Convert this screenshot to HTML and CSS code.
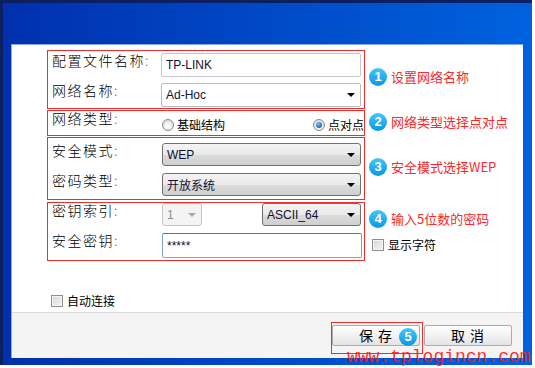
FILE: index.html
```html
<!DOCTYPE html>
<html lang="zh-CN">
<head>
<meta charset="utf-8">
<title>配置文件</title>
<link rel="stylesheet" href="styles.css">
</head>
<body>
<div class="window">
  <div class="client">
    <div class="main">
      <div class="section sec-1">
        <div class="box box-name">
          <div class="row row-24">
            <span class="label label-narrow">配置文件名称<span class="colon">:</span></span>
            <div class="field text-field w-200">TP-LINK</div>
          </div>
          <div class="row row-24">
            <span class="label label-narrow">网络名称<span class="colon">:</span></span>
            <div class="field select-white w-200"><span class="val">Ad-Hoc</span><i class="arrow"></i></div>
          </div>
        </div>
        <div class="note note-1"><span class="badge">1</span><span class="note-text">设置网络名称</span></div>
      </div>

      <div class="section sec-2">
        <div class="box box-type">
          <span class="label">网络类型<span class="colon">:</span></span>
          <div class="radios">
            <span class="radio-item"><span class="radio"></span>基础结构</span>
            <span class="radio-item"><span class="radio checked"></span>点对点</span>
          </div>
        </div>
        <div class="note note-2"><span class="badge">2</span><span class="note-text">网络类型选择点对点</span></div>
      </div>

      <div class="section sec-3">
        <div class="box box-sec">
          <div class="row row-23">
            <span class="label">安全模式<span class="colon">:</span></span>
            <div class="field select-grey w-199"><span class="val">WEP</span><i class="arrow"></i></div>
          </div>
          <div class="row row-23">
            <span class="label">密码类型<span class="colon">:</span></span>
            <div class="field select-grey w-199"><span class="val cjk">开放系统</span><i class="arrow"></i></div>
          </div>
        </div>
        <div class="note note-3"><span class="badge">3</span><span class="note-text">安全模式选择WEP</span></div>
      </div>

      <div class="section sec-4">
        <div class="box box-key">
          <div class="row row-23">
            <span class="label">密钥索引<span class="colon">:</span></span>
            <div class="field select-disabled w-40"><span class="val">1</span><i class="arrow"></i></div>
            <div class="field select-grey w-99 push"><span class="val">ASCII_64</span><i class="arrow"></i></div>
          </div>
          <div class="row row-25">
            <span class="label">安全密钥<span class="colon">:</span></span>
            <div class="field pass-field w-200"><span class="val">*****</span></div>
          </div>
        </div>
        <div class="note-col">
          <div class="note note-4"><span class="badge">4</span><span class="note-text">输入5位数的密码</span></div>
          <div class="check-row show-chars"><span class="checkbox"></span>显示字符</div>
        </div>
      </div>

      <div class="check-row auto-connect"><span class="checkbox"></span>自动连接</div>
    </div>

    <div class="footer">
      <div class="save-mark">
        <div class="btn">保 存</div>
        <span class="badge badge-5">5</span>
      </div>
      <div class="btn btn-cancel">取 消</div>
    </div>
  </div>
</div>
<div class="watermark">www.tplogincn.com</div>
</body>
</html>
```

FILE: styles.css
```css
* {
  box-sizing: border-box;
  margin: 0;
  padding: 0;
}

html,
body {
  width: 535px;
  height: 368px;
  background: #ffffff;
  overflow: hidden;
}

body {
  position: relative;
  font-family: "Noto Sans CJK SC", "Liberation Sans", sans-serif;
  color: #000000;
}

.window {
  width: 532px;
  height: 365px;
  border-top: 3px solid #0c1f60;
  border-left: 3px solid #0c1f60;
  background: linear-gradient(to right, #0030ae, #0062df);
  padding: 41px 9px 7px 8px;
  display: flex;
  flex-direction: column;
}

.client {
  flex: 1;
  display: flex;
  flex-direction: column;
  background: #ffffff;
  border-top: 1px solid #86aaf0;
  border-left: 1px solid #86aaf0;
}

.main {
  height: 267px;
  padding: 5px 0 0 35px;
}

.section {
  display: flex;
  align-items: flex-start;
}

.sec-2,
.sec-3 {
  margin-top: 1px;
}

.sec-4 {
  margin-top: 2px;
}

.box {
  width: 318px;
  border: 1px solid #ee2d2d;
  padding-left: 4px;
}

.box-name {
  height: 59px;
  padding-top: 2px;
  display: flex;
  flex-direction: column;
  gap: 6px;
}

.box-type {
  height: 26px;
  display: flex;
  align-items: flex-start;
}

.box-sec {
  height: 63px;
  padding-top: 5px;
  display: flex;
  flex-direction: column;
  gap: 7px;
}

.box-key {
  height: 59px;
  display: flex;
  flex-direction: column;
  gap: 7px;
}

.row {
  display: flex;
  align-items: flex-start;
}

.row-24 { height: 24px; }
.row-23 { height: 23px; }
.row-25 { height: 25px; }

.label {
  flex: none;
  width: 110px;
  font-size: 14px;
  font-weight: 300;
  line-height: 14px;
  letter-spacing: 1.5px;
  white-space: nowrap;
  color: #000000;
}

.label-narrow {
  width: 109px;
}

.colon {
  color: #9a6a3a;
}

.field {
  flex: none;
  display: flex;
  align-items: center;
  height: 100%;
  padding: 0 5px 0 4px;
  font-family: "Liberation Sans", sans-serif;
  font-size: 12px;
  color: #101030;
  white-space: nowrap;
}

.w-200 { width: 200px; }
.w-199 { width: 199px; }
.w-99 { width: 99px; }
.w-40 { width: 40px; }

.push {
  margin-left: 60px;
}

.val {
  flex: 1;
}

.cjk {
  font-family: "Noto Sans CJK SC", sans-serif;
  font-size: 12px;
}

.arrow {
  flex: none;
  width: 0;
  height: 0;
  border-left: 4px solid transparent;
  border-right: 4px solid transparent;
  border-top: 4px solid #000000;
}

.text-field {
  border: 1px solid #c4c8ce;
  border-radius: 2px;
  background: #ffffff;
}

.select-white {
  border: 1px solid #bcbcbc;
  border-radius: 2px;
  background: #ffffff;
}

.select-grey {
  border: 1px solid #707070;
  border-radius: 3px;
  background: linear-gradient(#f4f4f4, #e9e9e9 50%, #dcdcdc 51%, #cfcfcf);
}

.select-disabled {
  border: 1px solid #c5c5c5;
  border-radius: 3px;
  background: #f4f4f4;
  color: #8c8c8c;
}

.select-disabled .arrow {
  border-top-color: #a8a8a8;
}

.pass-field {
  border: 1px solid #7da2ce;
  border-top-color: #3d7bad;
  border-radius: 2px;
  background: #ffffff;
  align-items: flex-start;
  padding-top: 5px;
}

.radios {
  flex: 1;
  display: flex;
  justify-content: space-between;
  margin-top: 7px;
}

.radio-item {
  display: flex;
  align-items: center;
  gap: 3px;
  height: 14px;
  font-size: 12px;
  line-height: 14px;
}

.radio {
  flex: none;
  width: 12px;
  height: 12px;
  border-radius: 50%;
  border: 1px solid #8a8a8a;
  background: radial-gradient(circle at 50% 60%, #ffffff 0, #f0f0f0 40%, #cfcfcf 100%);
  display: flex;
  align-items: center;
  justify-content: center;
}

.radio.checked::after {
  content: "";
  width: 6px;
  height: 6px;
  border-radius: 50%;
  background: radial-gradient(circle at 40% 35%, #7ec4f5, #1b63b8 70%, #0f3f8a);
}

.note {
  display: flex;
  align-items: center;
  gap: 4px;
  margin-left: 4px;
}

.note-1 { margin-top: 18px; }
.note-2 { margin-top: 3px; }
.note-3 { margin-top: 21px; }
.note-4 { margin-top: 8px; }

.badge {
  flex: none;
  width: 18px;
  height: 18px;
  border-radius: 50%;
  background: linear-gradient(#45c6fb, #0c97e2);
  color: #ffffff;
  font-family: "Liberation Sans", sans-serif;
  font-weight: bold;
  font-size: 13px;
  line-height: 18px;
  text-align: center;
}

.note-text {
  font-size: 13px;
  line-height: 18px;
  color: #f82a2a;
  white-space: nowrap;
}

.note-col {
  display: flex;
  flex-direction: column;
}

.check-row {
  display: flex;
  align-items: center;
  gap: 4px;
  font-size: 12px;
  line-height: 13px;
  white-space: nowrap;
}

.show-chars {
  margin: 10px 0 0 7px;
}

.auto-connect {
  margin: 33px 0 0 4px;
}

.checkbox {
  flex: none;
  width: 12px;
  height: 12px;
  border: 1px solid #8e8f8f;
  background: linear-gradient(135deg, #d6d6d6, #f6f6f6);
  box-shadow: inset 0 0 0 1px #f4f4f4;
}

.footer {
  flex: 1;
  background: #f4f4f4;
  border-top: 1px solid #dcdcdc;
  padding: 9px 11px 0 0;
  display: flex;
  justify-content: flex-end;
  align-items: flex-start;
}

.save-mark {
  position: relative;
  border: 1px solid #ee2d2d;
  padding: 2px 2px 7px 0;
}

.btn {
  width: 88px;
  height: 21px;
  border: 1px solid #acacac;
  border-radius: 2px;
  background: linear-gradient(#ffffff, #f2f2f2 50%, #e4e4e4);
  font-size: 14px;
  line-height: 19px;
  letter-spacing: 1px;
  text-align: center;
  color: #000000;
}

.btn-cancel {
  margin: 3px 0 0 1px;
}

.badge-5 {
  position: absolute;
  left: 67px;
  top: 5px;
}

.watermark {
  position: absolute;
  left: 347px;
  top: 348px;
  font-family: "Liberation Mono", monospace;
  font-size: 18px;
  line-height: 18px;
  color: rgba(255, 20, 20, 0.9);
  white-space: nowrap;
}
```
